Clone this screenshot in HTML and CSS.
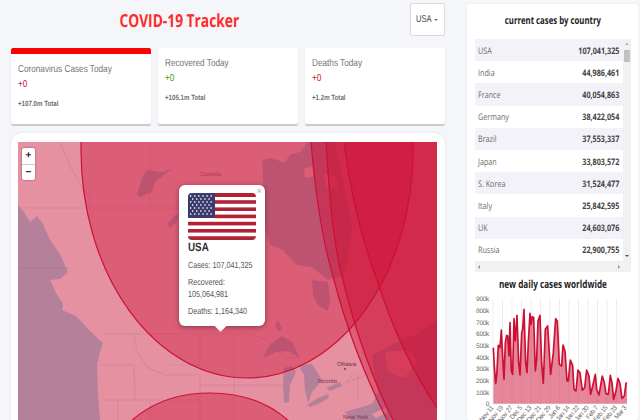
FILE: index.html
```html
<!DOCTYPE html>
<html lang="en">
<head>
  <meta charset="UTF-8" />
  <title>COVID-19 Tracker</title>
  <link rel="stylesheet" href="styles.css">
</head>
<body>

  <div class="app-left">
    <header class="app-header">
      <h1>COVID-19 Tracker</h1>
      <div class="country-select"><span class="country-name">USA</span><span class="caret"></span></div>
    </header>

    <section class="stats">
      <div class="info-box info-box-active">
        <p class="info-title">Coronavirus Cases Today</p>
        <p class="info-today red">+0</p>
        <p class="info-total">+107.0m Total</p>
      </div>
      <div class="info-box">
        <p class="info-title">Recovered Today</p>
        <p class="info-today green">+0</p>
        <p class="info-total">+105.1m Total</p>
      </div>
      <div class="info-box">
        <p class="info-title">Deaths Today</p>
        <p class="info-today red">+0</p>
        <p class="info-total">+1.2m Total</p>
      </div>
    </section>

    <section class="map-card">
      <div class="map">
        <svg class="map-svg" viewBox="18 142 419 278" width="419" height="278">
          <rect x="18" y="142" width="419" height="278" fill="#e591a2"/>
          <!-- water -->
          <g fill="#b5809a">
            <path d="M18 205 L24 212 L30 222 L37 216 L43 224 L50 240 L60 254 L68 272 L60 279 L50 280 L56 293 L63 304 L62 310 L76 316 L92 333 L103 343 L100 352 L97 365 L98 395 L100 420 L18 420Z"/>
            <path d="M262 142 L264 225 L270 245 L283 250 L297 265 L312 267 L328 280 L345 275 L352 230 L345 190 L335 142Z"/>
            <path d="M137 195 L142 178 L147 170 L162 172 L172 169 L164 175 L155 182 L152 192 L140 197Z"/>
            <path d="M167 225 L172 218 L178 214 L177 222 L170 228Z"/>
            <path d="M312 280 L328 282 L330 300 L328 311 L318 305 L313 295Z"/>
            <path d="M263 358 L270 345 L282 336 L292 342 L300 358 L288 351 L276 352Z"/>
            <path d="M284 368 L292 366 L296 372 L290 385 L289 402 L284 403 L283 385Z"/>
            <path d="M298 365 L312 364 L322 380 L312 392 L308 403 L305 390 L304 375Z"/>
            <path d="M307 405 L318 398 L328 394 L329 398 L318 404 L310 407Z"/>
            <path d="M326 388 L340 382 L342 386 L330 391Z"/>
            <path d="M350 420 L345 412 L372 404 L378 392 L372 355 L392 345 L415 335 L437 320 L437 420Z"/>
            <path d="M278 320 L282 328 L279 332 L275 326Z"/>
          </g>
          <!-- land over the bays -->
          <g fill="#e591a2">
            <path d="M262 142 H307 L301 152 L290 154 L285 163 L272 158 L262 160Z"/>
            <path d="M304 169 L312 166 L314 176 L305 178Z"/>
            <path d="M324 174 L336 176 L338 190 L326 186Z"/>
            <path d="M385 352 L410 350 L418 362 L404 378 L388 372Z"/>
            <path d="M372 414 L385 408 L388 412 L376 418Z"/>
          </g>
          <!-- borders -->
          <g fill="none" stroke="#a85b7b" stroke-opacity="0.3" stroke-width="0.8">
            <path d="M18 208 H250"/>
            <path d="M105 334 H250 L268 340 L285 358 L300 358"/>
            <path d="M134 334 L137 352 L148 368 L165 375 H200 V400"/>
            <path d="M100 365 H134 L135 400 H105"/>
            <path d="M135 400 H200 V420"/>
            <path d="M118 400 V420 M150 400 V420 M170 365 H200 M200 334 V365 M234 334 V420 M200 385 H282"/>
            <path d="M60 142 L72 170 L90 200 L90 208 M150 142 V208 M355 373 L345 383 L372 373 M358 373 V400"/>
            <path d="M18 268 H70"/>
          </g>
          <!-- case circles -->
          <g fill="#cc1034" fill-opacity="0.4" stroke="#cc1034" stroke-width="1.2">
            <ellipse cx="247" cy="150" rx="166" ry="228"/>
            <ellipse cx="210" cy="466" rx="100" ry="73"/>
            <path d="M311 142 C315 190 322 240 334 280 C347 330 367 380 387 420 L390 426 H445 V135 H310Z"/>
            <path d="M326 142 C329 190 333 245 343 280 C355 330 373 380 393 420 L396 426 H445 V135 H325Z"/>
            <path d="M344 142 C350 190 362 240 377 280 C393 330 413 372 437 408 L445 420 V135 H343Z"/>
          </g>
          <g class="map-label">
            <text class="map-label-country" x="200" y="176">Canada</text>
            <text x="337" y="366">Ottawa</text>
            <circle cx="345" cy="369" r="1" fill="#7d3a55"/>
            <text x="317" y="383">Toronto</text>
            <text x="343" y="419">New York</text>
          </g>
        </svg>

        <div class="zoom-control">
          <div class="zoom-btn">+</div>
          <div class="zoom-btn">&minus;</div>
        </div>

        <div class="popup">
          <span class="popup-close">&times;</span>
          <svg class="flag" viewBox="0 0 68 47" width="68" height="47">
            <rect width="68" height="47" rx="4" fill="#fff"/>
            <g fill="#b22234">
              <path d="M4 0 H64 A4 4 0 0 1 68 4 H27 V0Z"/>
              <rect x="27" y="7.2" width="41" height="3.6"/>
              <rect x="27" y="14.4" width="41" height="3.6"/>
              <rect x="27" y="21.6" width="41" height="3.6"/>
              <rect y="28.8" width="68" height="3.6"/>
              <rect y="36" width="68" height="3.6"/>
              <path d="M0 43.2 H68 A4 4 0 0 1 64 47 H4 A4 4 0 0 1 0 43.2Z"/>
            </g>
            <path d="M4 0 H27 V25 H0 V4 A4 4 0 0 1 4 0Z" fill="#3c3b6e"/>
            <path d="M2 3 H26 M4 6 H24 M2 9 H26 M4 12 H24 M2 15 H26 M4 18 H24 M2 21 H26" stroke="#fff" stroke-width="1.3" stroke-dasharray="1.3 2.8" fill="none"/>
          </svg>
          <p class="popup-name">USA</p>
          <p class="popup-line">Cases: 107,041,325</p>
          <p class="popup-line">Recovered:<br>105,064,981</p>
          <p class="popup-line">Deaths: 1,164,340</p>
          <span class="popup-tip"></span>
        </div>
      </div>
    </section>
  </div>

  <aside class="app-right">
    <h3><span>current cases by country</span></h3>
    <div class="table-wrap">
      <div class="table-inner">
        <div class="table">
          <div class="row"><span>USA</span><strong>107,041,325</strong></div>
          <div class="row"><span>India</span><strong>44,986,461</strong></div>
          <div class="row"><span>France</span><strong>40,054,863</strong></div>
          <div class="row"><span>Germany</span><strong>38,422,054</strong></div>
          <div class="row"><span>Brazil</span><strong>37,553,337</strong></div>
          <div class="row"><span>Japan</span><strong>33,803,572</strong></div>
          <div class="row"><span>S. Korea</span><strong>31,524,477</strong></div>
          <div class="row"><span>Italy</span><strong>25,842,595</strong></div>
          <div class="row"><span>UK</span><strong>24,603,076</strong></div>
          <div class="row"><span>Russia</span><strong>22,900,755</strong></div>
        </div>
        <div class="scroll-y">
          <span class="arrow-up"></span>
          <span class="thumb-y"></span>
          <span class="arrow-down"></span>
        </div>
      </div>
      <div class="scroll-x">
        <span class="arrow-left"></span>
        <span class="arrow-right"></span>
      </div>
    </div>

    <h3 class="chart-title"><span>new daily cases worldwide</span></h3>
    <svg class="chart" viewBox="0 0 171 128" width="171" height="128">
      <g class="chart-grid" transform="translate(-467 -292)">
        <path d="M493 298 V403 M502.500 298 V403 M512 298 V403 M521.500 298 V403 M531 298 V403 M540.500 298 V403 M550 298 V403 M559.500 298 V403 M569 298 V403 M578.500 298 V403 M588 298 V403 M597.500 298 V403 M607 298 V403 M616.500 298 V403"/>
      </g>
      <g class="chart-y" transform="translate(-467 -292)">
        <text x="489" y="300">900k</text>
        <text x="489" y="312">800k</text>
        <text x="489" y="323.500">700k</text>
        <text x="489" y="335">600k</text>
        <text x="489" y="347">500k</text>
        <text x="489" y="358.500">400k</text>
        <text x="489" y="370">300k</text>
        <text x="489" y="382">200k</text>
        <text x="489" y="393.500">100k</text>
        <text x="489" y="405">0</text>
      </g>
      <g transform="translate(-467 -292) translate(440 275) scale(0.3333)">
        <path class="chart-area" d="M160 383 L160 215 L163 270 L167 322 L170 300 L175 208 L180 215 L184 162 L188 240 L192 310 L196 200 L200 178 L203 180 L207 240 L210 140 L214 285 L218 295 L222 128 L226 195 L231 118 L236 260 L240 297 L245 170 L248 160 L252 100 L257 260 L261 290 L265 200 L270 112 L273 145 L277 122 L281 125 L286 285 L290 250 L294 135 L300 118 L305 260 L310 322 L316 160 L323 150 L332 295 L340 230 L347 128 L352 135 L358 265 L365 270 L369 207 L375 225 L381 315 L385 315 L391 252 L398 268 L402 340 L408 345 L414 282 L420 290 L427 343 L434 335 L440 282 L447 300 L452 355 L458 330 L466 295 L470 340 L477 357 L487 300 L493 320 L498 353 L505 355 L511 298 L516 320 L521 370 L528 345 L534 307 L540 322 L546 367 L553 360 L558 322 L561 320 L561 383Z"/>
        <path class="chart-line" d="M160 215 L163 270 L167 322 L170 300 L175 208 L180 215 L184 162 L188 240 L192 310 L196 200 L200 178 L203 180 L207 240 L210 140 L214 285 L218 295 L222 128 L226 195 L231 118 L236 260 L240 297 L245 170 L248 160 L252 100 L257 260 L261 290 L265 200 L270 112 L273 145 L277 122 L281 125 L286 285 L290 250 L294 135 L300 118 L305 260 L310 322 L316 160 L323 150 L332 295 L340 230 L347 128 L352 135 L358 265 L365 270 L369 207 L375 225 L381 315 L385 315 L391 252 L398 268 L402 340 L408 345 L414 282 L420 290 L427 343 L434 335 L440 282 L447 300 L452 355 L458 330 L466 295 L470 340 L477 357 L487 300 L493 320 L498 353 L505 355 L511 298 L516 320 L521 370 L528 345 L534 307 L540 322 L546 367 L553 360 L558 322 L561 320"/>
      </g>
      <g class="chart-x" transform="translate(-467 -292)">
        <text transform="translate(494 407) rotate(-50)">Nov 11</text>
        <text transform="translate(503.500 407) rotate(-50)">Nov 19</text>
        <text transform="translate(513 407) rotate(-50)">Nov 27</text>
        <text transform="translate(522.500 407) rotate(-50)">Dec 5</text>
        <text transform="translate(532 407) rotate(-50)">Dec 13</text>
        <text transform="translate(541.500 407) rotate(-50)">Dec 21</text>
        <text transform="translate(551 407) rotate(-50)">Dec 29</text>
        <text transform="translate(560.500 407) rotate(-50)">Jan 6</text>
        <text transform="translate(570 407) rotate(-50)">Jan 14</text>
        <text transform="translate(579.500 407) rotate(-50)">Jan 22</text>
        <text transform="translate(589 407) rotate(-50)">Jan 30</text>
        <text transform="translate(598.500 407) rotate(-50)">Feb 7</text>
        <text transform="translate(608 407) rotate(-50)">Feb 15</text>
        <text transform="translate(617.500 407) rotate(-50)">Feb 23</text>
        <text transform="translate(627 407) rotate(-50)">Mar 3</text>
      </g>
    </svg>
  </aside>

</body>
</html>
```

FILE: styles.css
```css
* {
  margin: 0;
  padding: 0;
  box-sizing: border-box;
}

body, html {
  height: 100%;
  overflow: hidden;
}

body {
  display: flex;
  align-items: flex-start;
  background-color: #f5f6fa;
  font-family: "Liberation Sans", Arial, sans-serif;
  text-rendering: geometricPrecision;
  height: 420px;
}

.app-left {
  width: 434px;
  margin-left: 11px;
  padding-top: 3px;
}

.app-header {
  display: flex;
  justify-content: space-between;
  align-items: flex-start;
  height: 45px;
}

.app-header h1 {
  margin: 5px 0 0 90px;
  font-family: "Open Sans", sans-serif;
  font-size: 18px;
  line-height: 26px;
  font-weight: 700;
  color: #fe2b2b;
  transform: scaleX(0.765);
}

.country-select {
  display: flex;
  align-items: center;
  width: 35px;
  height: 33px;
  padding-left: 5px;
  background-color: #fff;
  border: 1px solid #d9d9d9;
  border-radius: 2px;
  font-size: 10px;
  color: #444;
}

.country-name {
  width: 18px;
  transform: scaleX(0.75);
  transform-origin: left;
}

.caret {
  width: 0;
  height: 0;
  border-left: 2.5px solid transparent;
  border-right: 2.5px solid transparent;
  border-top: 2.5px solid #757575;
}

.stats {
  display: flex;
  gap: 7px;
  height: 76px;
}

.info-box {
  flex: 1;
  padding: 10px 7px;
  background-color: #fff;
  border-radius: 2px;
  box-shadow: 0 1.5px 1px #c9c9c9;
}

.info-box-active {
  padding-top: 10px;
  border-top: 6px solid #ff0000;
}

/* reference text is narrower than Arial */
.info-title,
.info-today,
.info-total,
.popup-name,
.popup-line {
  transform: scaleX(0.82);
  transform-origin: left;
  white-space: nowrap;
}

.info-title {
  font-size: 10px;
  line-height: 12px;
  color: #757575;
}

.info-today {
  margin-top: 3px;
  font-size: 10px;
  line-height: 12px;
}

.red {
  color: #cc1034;
}

.green {
  color: #3f9a12;
}

.info-total {
  margin-top: 7px;
  font-size: 7.5px;
  line-height: 11px;
  font-weight: 700;
  color: #6f6f6f;
}

.map-card {
  margin-top: 9px;
  padding: 9px 7px 0;
  height: 290px;
  background-color: #fff;
  border-radius: 10px 10px 0 0;
  box-shadow: 0 0 2px #d5d7dd;
}

.map {
  position: relative;
  height: 278px;
  overflow: hidden;
}

.map-svg {
  display: block;
}

.map-label text {
  font-size: 6px;
  fill: #6d3450;
}

.map-label .map-label-country {
  fill: #b8385a;
}

.zoom-control {
  position: absolute;
  top: 6px;
  left: 4px;
  width: 13px;
  background-color: #fff;
  border-radius: 2px;
  box-shadow: 0 0 2px rgba(0, 0, 0, 0.5);
}

.zoom-btn {
  height: 16px;
  font-size: 10px;
  font-weight: 700;
  line-height: 15px;
  text-align: center;
  color: #222;
}

.zoom-btn + .zoom-btn {
  border-top: 1px solid #ccc;
}

.popup {
  position: absolute;
  top: 43px;
  left: 161px;
  width: 86px;
  height: 141px;
  padding: 8px 9px;
  background-color: #fff;
  border-radius: 6px;
  box-shadow: 0 1px 5px rgba(0, 0, 0, 0.4);
}

.popup-close {
  position: absolute;
  top: 1px;
  right: 3px;
  font-size: 10px;
  line-height: 11px;
  color: #b5b5b5;
}

.flag {
  display: block;
}

.popup-name {
  font-size: 12px;
  line-height: 14px;
  font-weight: 700;
  color: #333;
}

.popup-line {
  margin-top: 5px;
  font-size: 8.8px;
  line-height: 12px;
  color: #555;
}

.popup-tip {
  position: absolute;
  left: 37px;
  bottom: -4px;
  width: 9px;
  height: 9px;
  background-color: #fff;
  transform: rotate(45deg);
}

.app-right {
  width: 171px;
  height: 416px;
  margin: 4px 0 0 22px;
  padding-top: 9px;
  background-color: #fff;
  border-radius: 3px;
  box-shadow: 0 0 2px #e3e5ea;
}

.app-right h3 {
  font-family: "Open Sans", sans-serif;
  font-size: 10.5px;
  line-height: 16px;
  font-weight: 700;
  text-align: center;
  color: #222;
  white-space: nowrap;
}

.app-right h3 span {
  display: inline-block;
  transform: scaleX(0.74);
}

.table-wrap {
  width: 156px;
  margin: 10px 0 0 8px;
}

.table-inner {
  display: flex;
  height: 222px;
}

.table {
  flex: 1;
  overflow: hidden;
}

.row {
  display: flex;
  justify-content: space-between;
  align-items: center;
  height: 22.2px;
  padding: 0 4px 0 3px;
  font-family: "Open Sans", sans-serif;
  font-size: 9px;
  color: #6b6b6b;
}

.row span {
  transform: scaleX(0.8);
  transform-origin: left;
}

.row strong {
  color: #444;
  transform: scaleX(0.8);
  transform-origin: right;
}

.row:nth-child(odd) {
  background-color: #f3f2f8;
}

.scroll-y {
  display: flex;
  flex-direction: column;
  align-items: center;
  width: 8px;
  background-color: #f1f1f1;
}

.arrow-up,
.arrow-down {
  width: 0;
  height: 0;
  border-left: 2px solid transparent;
  border-right: 2px solid transparent;
}

.arrow-up {
  margin-top: 4px;
  border-bottom: 2px solid #b0b0b0;
}

.thumb-y {
  width: 6px;
  height: 12px;
  margin-top: 5px;
  background-color: #c1c1c1;
}

.arrow-down {
  margin-top: auto;
  margin-bottom: 4px;
  border-top: 2px solid #505050;
}

.scroll-x {
  display: flex;
  justify-content: space-between;
  align-items: center;
  height: 11px;
  padding: 0 11px 0 3px;
  background-color: #f1f1f1;
}

.arrow-left,
.arrow-right {
  width: 0;
  height: 0;
  border-top: 2px solid transparent;
  border-bottom: 2px solid transparent;
}

.arrow-left {
  border-right: 2px solid #909090;
}

.arrow-right {
  border-left: 2px solid #909090;
}

.app-right .chart-title {
  margin-top: 6px;
  font-size: 11px;
  line-height: 14px;
  color: #222;
}

.chart {
  display: block;
  margin-top: 1px;
}

.chart-grid path {
  fill: none;
  stroke: #e6e6e6;
  stroke-width: 0.7;
}

.chart-y text,
.chart-x text {
  font-size: 6.5px;
  letter-spacing: -0.3px;
  text-anchor: end;
  fill: #666;
}

.chart-area {
  fill: #cc1034;
  fill-opacity: 0.5;
}

.chart-line {
  fill: none;
  stroke: #cc1034;
  stroke-width: 5;
  stroke-linejoin: round;
}
```
